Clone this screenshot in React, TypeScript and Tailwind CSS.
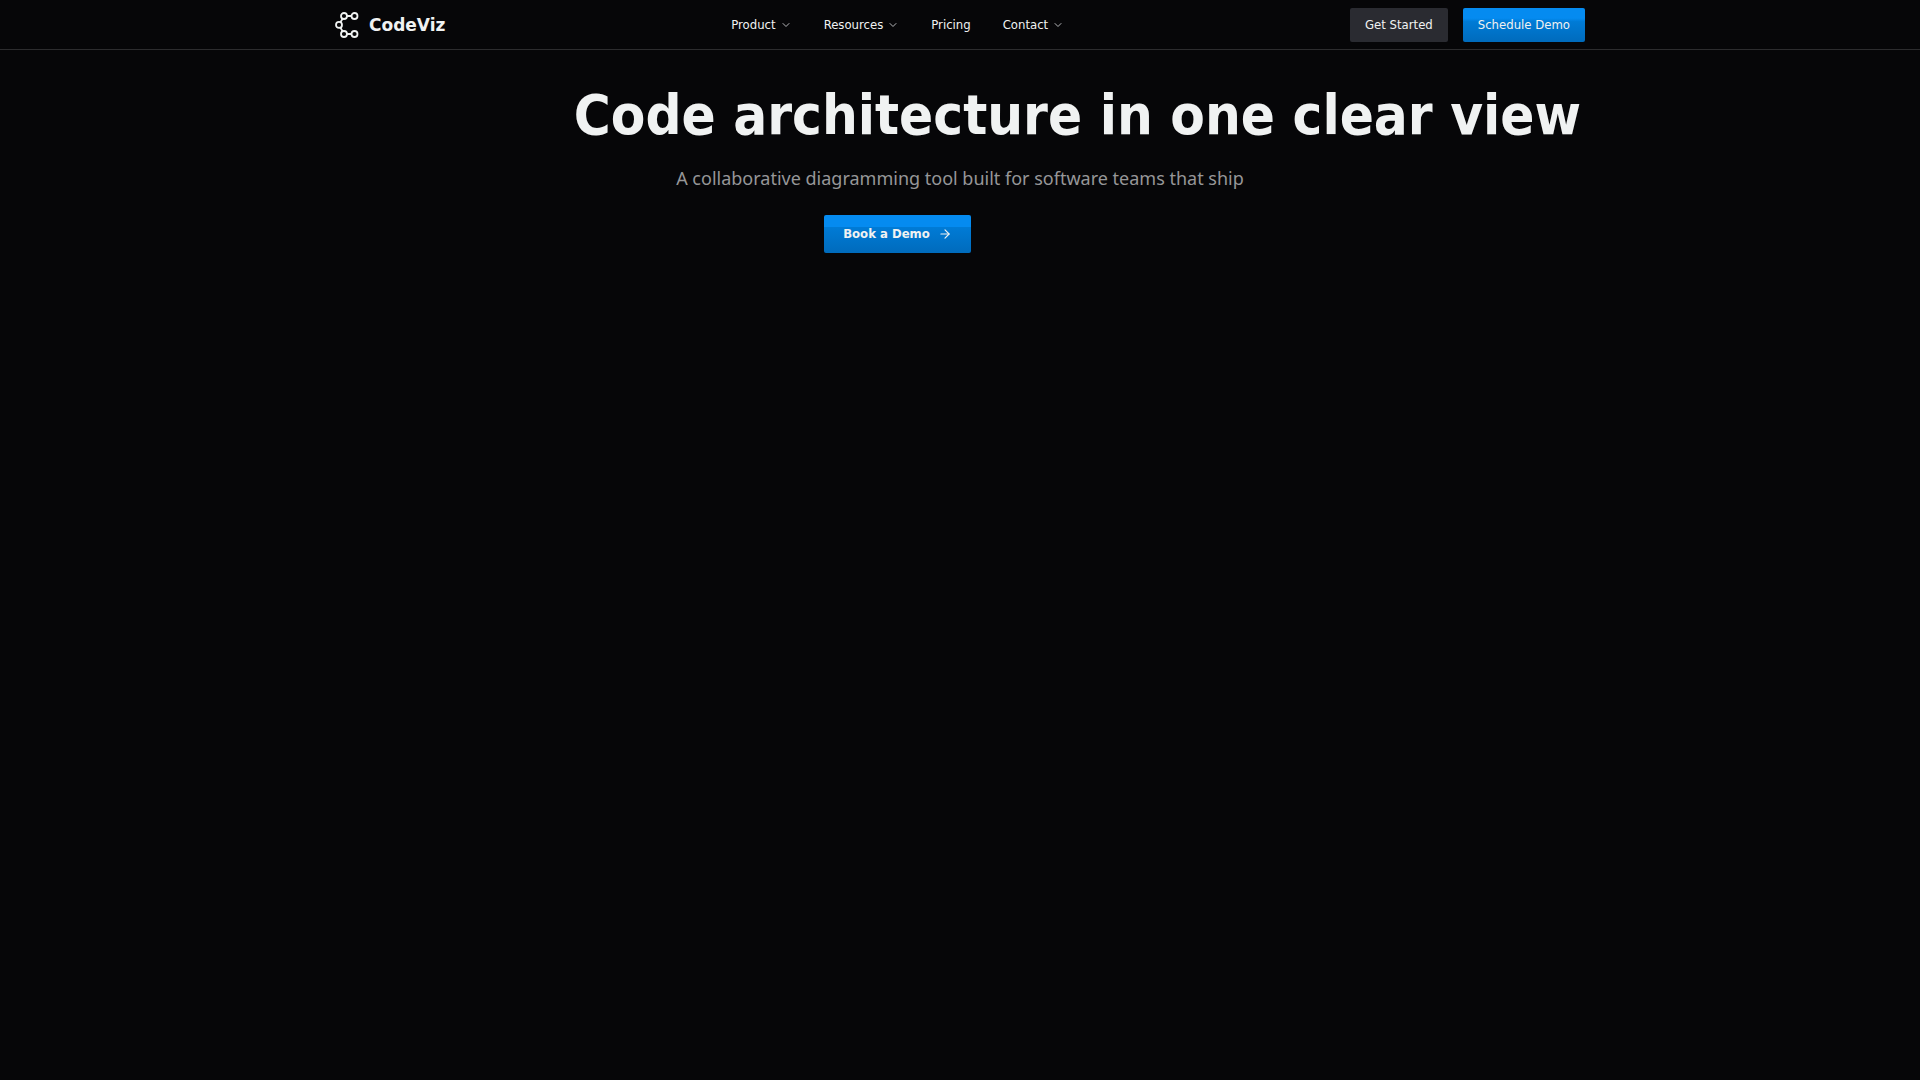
import React from 'react';
import { ArrowRight, ChevronDown } from 'lucide-react';

const navItems = [
  { label: 'Product', menu: true },
  { label: 'Resources', menu: true },
  { label: 'Pricing', menu: false },
  { label: 'Contact', menu: true },
];

const Logo: React.FC = () => (
  <svg className="w-6 h-[26px]" viewBox="0 0 24 26" fill="none" stroke="currentColor" strokeWidth="1.8" aria-hidden="true">
    <path d="M12 4h4.5M12 22h4.5M7.6 6.8L5.4 10.2M5.4 15.6L7.6 19.2" />
    <circle cx="9" cy="4" r="3" />
    <circle cx="19.5" cy="4" r="3" />
    <circle cx="4" cy="12.9" r="3" />
    <circle cx="9" cy="22" r="3" />
    <circle cx="19.5" cy="22" r="3" />
  </svg>
);

const NavBar: React.FC = () => {
  return (
    <header className="border-b border-[#2c2c2e]">
      <div className="mx-auto flex h-[49px] max-w-[1250px] items-center justify-between">
        <a href="#" className="flex items-center gap-2.5 font-['DejaVu_Sans',sans-serif] text-[17px] font-bold leading-6">
          <Logo />
          CodeViz
        </a>

        <nav className="flex items-center gap-8">
          {navItems.map((item) =>
            item.menu ? (
              <button key={item.label} type="button" className="flex items-center gap-1">
                {item.label}
                <ChevronDown className="size-3 text-[#b4b5b8]" strokeWidth={2} />
              </button>
            ) : (
              <a key={item.label} href="#">
                {item.label}
              </a>
            )
          )}
        </nav>

        <div className="flex items-center gap-[15px]">
          <button type="button" className="h-[34px] rounded-xs bg-[#2a2b31] px-[15px]">
            Get Started
          </button>
          <button type="button" className="h-[34px] rounded-xs bg-linear-to-b from-[#058bf0] from-30% via-[#007bd6] via-40% to-[#006bbc] px-[15px]">
            Schedule Demo
          </button>
        </div>
      </div>
    </header>
  );
};

const Hero: React.FC = () => {
  return (
    <main className="mx-auto flex max-w-[1250px] flex-col items-center pt-[30px]">
      <h1 className="self-end pr-1 text-[56px] font-bold leading-[70px]">Code architecture in one clear view</h1>
      <p className="mt-4 font-['Noto_Sans',sans-serif] text-[18px] leading-6 text-[#969698]">
        A collaborative diagramming tool built for software teams that ship
      </p>
      <div className="mt-[25px] pr-[125px]">
        <button
          type="button"
          className="flex h-[38px] items-center gap-2 rounded-xs bg-linear-to-b from-[#058bf0] from-32% via-[#007bd6] via-32% to-[#006bbc] px-[19px] font-bold"
        >
          Book a Demo
          <ArrowRight className="size-[14px]" strokeWidth={2} />
        </button>
      </div>
    </main>
  );
};

export default function App() {
  return (
    <div className="min-h-screen bg-[#060608] font-['DejaVu_Sans_Condensed','DejaVu_Sans',sans-serif] text-[13px] leading-5 text-[#f0f2f2]">
      <NavBar />
      <Hero />
    </div>
  );
}
